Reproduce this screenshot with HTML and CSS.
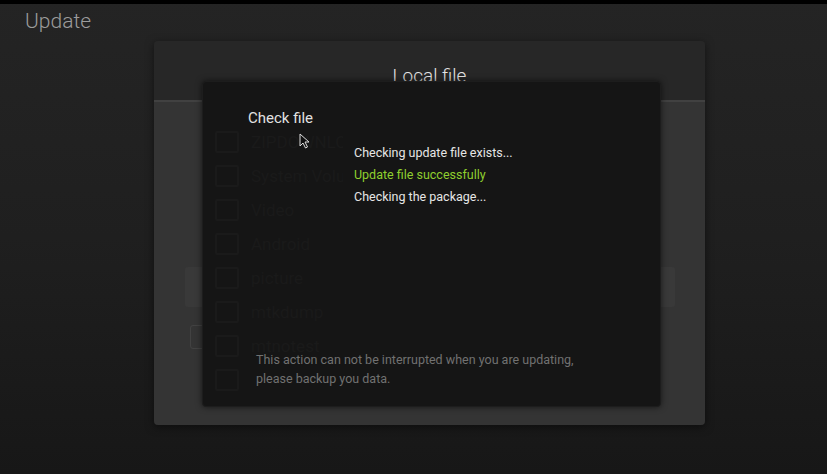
FILE: index.html
```html
<!DOCTYPE html>
<html>
<head>
  <title>Update</title>
  <link rel="stylesheet" href="styles.css">
</head>
<body>
  <div class="top-strip"></div>
  <h1 class="page-title">Update</h1>

  <div class="panel">
    <div class="panel-head">Local file</div>
    <div class="panel-body">
      <div class="panel-bar"></div>
      <div class="panel-btn"></div>
    </div>

    <!-- check dialog over the file list -->
    <div class="dialog">
      <ul class="ghost-list">
        <li><span class="ghost-icon"></span><span class="ghost-name">ZIPDOWNLOAD_LEVEL1_20170526_2</span></li>
        <li><span class="ghost-icon"></span><span class="ghost-name">System Volume Information</span></li>
        <li><span class="ghost-icon"></span><span class="ghost-name">Video</span></li>
        <li><span class="ghost-icon"></span><span class="ghost-name">Android</span></li>
        <li><span class="ghost-icon"></span><span class="ghost-name">picture</span></li>
        <li><span class="ghost-icon"></span><span class="ghost-name">mtkdump</span></li>
        <li><span class="ghost-icon"></span><span class="ghost-name">mtnotest</span></li>
        <li><span class="ghost-icon"></span></li>
      </ul>

      <div class="dialog-title">Check file</div>
      <div class="status">
        <p>Checking update file exists...</p>
        <p class="ok">Update file successfully</p>
        <p>Checking the package...</p>
      </div>
      <p class="note">This action can not be interrupted when you are updating,<br>please backup you data.</p>

      <svg class="cursor" width="12" height="17" viewBox="0 0 12 17">
        <path d="M1 1 L1 13 L4 10 L6.5 15 L8.5 14 L6 9 L10 9 Z" fill="#111" stroke="#ddd" stroke-width="1"/>
      </svg>
    </div>
  </div>
</body>
</html>
```

FILE: styles.css
```css
html, body {
  height: 100%;
}

body {
  margin: 0;
  font-family: Roboto, "Noto Sans", sans-serif;
  background: linear-gradient(#242424, #1f1f1f 50%, #171717);
  overflow: hidden;
}

.top-strip {
  height: 4px;
  background: #000;
}

.page-title {
  margin: 4px 0 0 25px;
  font-size: 21px;
  font-weight: 300;
  line-height: 26px;
  color: #9c9c9c;
}

/* back panel */
.panel {
  position: relative;
  width: 551px;
  height: 384px;
  margin: 7px 0 0 154px;
  border-radius: 4px;
  box-shadow: 0 2px 8px rgba(0, 0, 0, 0.5);
  display: flex;
  flex-direction: column;
}

.panel-head {
  height: 59px;
  background: #272727;
  border-radius: 4px 4px 0 0;
  text-align: center;
  font-size: 19px;
  font-weight: 300;
  color: #e4e4e4;
  padding-top: 23px;
  box-sizing: border-box;
}

.panel-body {
  flex: 1;
  background: #343434;
  border-top: 2px solid #414141;
  border-radius: 0 0 4px 4px;
  padding: 165px 30px 0 31px;
}

.panel-bar {
  height: 40px;
  background: #393939;
  border-radius: 3px;
}

.panel-btn {
  width: 60px;
  height: 22px;
  margin: 18px 0 0 5px;
  border: 1px solid #424242;
  border-radius: 3px;
}

/* dialog */
.dialog {
  position: absolute;
  left: 48px;
  top: 40px;
  width: 459px;
  height: 326px;
  box-sizing: border-box;
  background: #151515;
  border: 1px solid #1d1d1d;
  border-radius: 4px;
  box-shadow: 0 0 6px rgba(0, 0, 0, 0.6);
  padding: 26px 0 18px 45px;
  display: flex;
  flex-direction: column;
}

.ghost-list {
  position: absolute;
  left: 12px;
  top: 43px;
  margin: 0;
  padding: 0;
  list-style: none;
}

.ghost-list li {
  height: 34px;
  display: flex;
  align-items: center;
  gap: 12px;
  font-size: 17px;
  color: #1a1a1a;
  white-space: nowrap;
}

.ghost-name {
  max-width: 92px;
  overflow: hidden;
}

.ghost-icon {
  width: 24px;
  height: 22px;
  border: 2px solid #1a1a1a;
  border-radius: 2px;
  box-sizing: border-box;
}

.dialog-title {
  position: relative;
  font-size: 15px;
  line-height: 20px;
  color: #e2e2e2;
}

.status {
  position: relative;
  margin: 14px 0 0 106px;
}

.status p {
  margin: 0;
  font-size: 12.5px;
  line-height: 22px;
  color: #e6e6e6;
}

.status p.ok {
  color: #8fcf2e;
}

.note {
  position: relative;
  margin: auto 0 0 8px;
  font-size: 12.5px;
  line-height: 19px;
  color: #717171;
}

.cursor {
  position: absolute;
  left: 96px;
  top: 51px;
}
```
